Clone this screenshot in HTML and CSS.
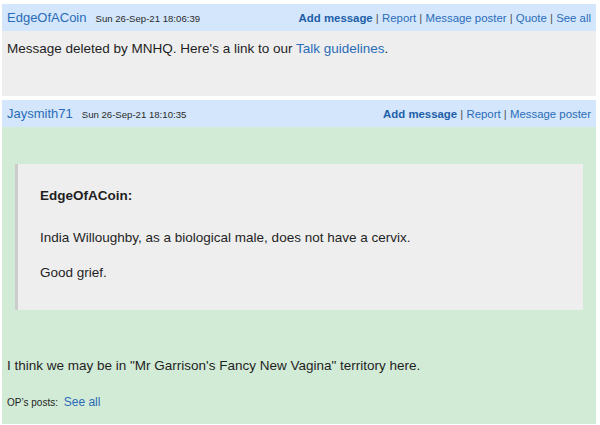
FILE: index.html
```html
<!DOCTYPE html>
<html>
<head>
<meta charset="utf-8">
<link rel="stylesheet" href="styles.css">
</head>
<body>
<div class="thread">
  <div class="post">
    <div class="post-head">
      <div class="who"><a class="name">EdgeOfACoin</a><span class="date">Sun 26-Sep-21 18:06:39</span></div>
      <div class="links"><a class="strong">Add message</a> | <a>Report</a> | <a>Message poster</a> | <a>Quote</a> | <a>See all</a></div>
    </div>
    <div class="post-body deleted">
      <p>Message deleted by MNHQ. Here's a link to our <a>Talk guidelines</a>.</p>
    </div>
  </div>
  <div class="post">
    <div class="post-head">
      <div class="who"><a class="name">Jaysmith71</a><span class="date">Sun 26-Sep-21 18:10:35</span></div>
      <div class="links"><a class="strong">Add message</a> | <a>Report</a> | <a>Message poster</a></div>
    </div>
    <div class="post-body op">
      <blockquote class="quote">
        <p class="quote-author">EdgeOfACoin:</p>
        <p>India Willoughby, as a biological male, does not have a cervix.</p>
        <p>Good grief.</p>
      </blockquote>
      <p class="msg">I think we may be in "Mr Garrison's Fancy New Vagina" territory here.</p>
      <p class="ops">OP’s posts: <a>See all</a></p>
    </div>
  </div>
</div>
</body>
</html>
```
FILE: styles.css
```css
html, body {
  margin: 0;
  padding: 0;
  background: #ffffff;
}
body {
  font-family: "Liberation Sans", Arial, sans-serif;
  color: #1f1f1f;
  padding: 4px 4px 0 2px;
}
a {
  color: #2a6cb8;
  text-decoration: none;
}
.thread {
  display: flex;
  flex-direction: column;
  gap: 4px;
}
.post-head {
  background: #d3e6fb;
  height: 27px;
  display: flex;
  align-items: center;
  justify-content: space-between;
  padding: 0 5px 0 5px;
}
.who {
  display: flex;
  align-items: center;
}
.name {
  font-size: 13px;
  color: #2a6cb8;
}
.date {
  font-size: 9.6px;
  color: #2a2a2a;
  margin-left: 9px;
  margin-top: 1px;
}
.links {
  font-size: 11.4px;
  color: #555555;
}
.links a {
  color: #2a6cb8;
}
.links a.strong {
  font-weight: bold;
  color: #1d5ea8;
}
.post-body {
  font-size: 13.5px;
  line-height: 18px;
}
.post-body p {
  margin: 0;
}
.deleted {
  background: #eeeeee;
  height: 65px;
  padding: 9px 5px 0 5px;
  box-sizing: border-box;
}
.op {
  background: #d2ebd6;
  padding: 37px 13px 12px 13px;
}
.quote {
  margin: 0;
  background: #eeeeee;
  border-left: 3px solid #cccccc;
  padding: 23px 22px 28px 22px;
  display: flex;
  flex-direction: column;
  gap: 17px;
}
.quote-author {
  font-weight: bold;
  margin-bottom: 7px !important;
}
.msg {
  margin-top: 47px !important;
  margin-left: -8px !important;
}
.ops {
  font-size: 10px;
  margin-top: 18px !important;
  margin-left: -8px !important;
}
.ops a {
  font-size: 12px;
  margin-left: 3px;
}
```
